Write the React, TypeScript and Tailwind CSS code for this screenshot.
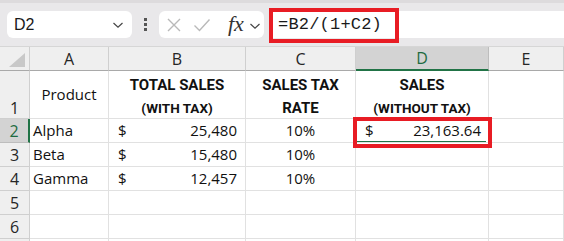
import React from "react";

const cols = ["A", "B", "C", "D", "E"];

const rows = [
  { n: "2", a: "Alpha", b: "25,480", c: "10%", d: "23,163.64" },
  { n: "3", a: "Beta", b: "15,480", c: "10%", d: "" },
  { n: "4", a: "Gamma", b: "12,457", c: "10%", d: "" },
  { n: "5", a: "", b: "", c: "", d: "" },
  { n: "6", a: "", b: "", c: "", d: "" },
  { n: "", a: "", b: "", c: "", d: "" },
];

const cell = "border-r border-b border-[#e1e1e1] bg-white";
const rowHead =
  "flex items-center justify-center border-r border-b border-[#cfcfcf] bg-[#efefef] text-[16px] text-[#262626]";

function Chevron({ className }: { className?: string }) {
  return (
    <svg width="12" height="8" viewBox="0 0 12 8" className={className}>
      <path d="M1.5 2 L6 6.2 L10.5 2" fill="none" stroke="#444" strokeWidth="1.2" />
    </svg>
  );
}

export default function App() {
  return (
    <div className="relative w-[564px] h-[241px] overflow-hidden bg-white font-['Open_Sans',sans-serif] text-[#111]">
      {/* formula toolbar */}
      <div className="h-[47px] bg-[#e9e8ea] border-t-[3px] border-[#dddbdd] border-b border-b-[#d6d6d6] flex items-center">
        <div className="ml-[7px] w-[125px] h-[27px] rounded-md bg-white flex items-center justify-between pl-[7px] pr-[8px]">
          <span className="text-[16px] leading-none text-[#1a1a1a] font-['Liberation_Sans',sans-serif]">D2</span>
          <Chevron />
        </div>
        <div className="w-[27px] flex flex-col items-center gap-[2px]">
          <span className="w-[3px] h-[3px] bg-[#555]" />
          <span className="w-[3px] h-[3px] bg-[#555]" />
          <span className="w-[3px] h-[3px] bg-[#555]" />
        </div>
        <div className="w-[105px] h-[27px] rounded-md bg-white flex items-center pl-[7px]">
          <svg width="16" height="16" viewBox="0 0 16 16">
            <path d="M2 2 L14 14 M14 2 L2 14" stroke="#b9b9b9" strokeWidth="1.4" fill="none" />
          </svg>
          <svg width="18" height="16" viewBox="0 0 18 16" className="ml-[11px]">
            <path d="M1.5 8.5 L6.5 13.5 L16.5 2.5" stroke="#b9b9b9" strokeWidth="1.4" fill="none" />
          </svg>
          <span className="ml-[17px] italic text-[22px] leading-none text-[#333] font-['Liberation_Serif',serif] pb-[2px]">fx</span>
          <Chevron className="ml-[5px] mt-[2px]" />
        </div>
        <div className="ml-[5px] flex-1 h-[27px] bg-white flex items-center pl-[9px]">
          <span className="text-[17px] leading-none tracking-[0.2px] text-[#1a1a1a] font-['Liberation_Mono',monospace]">=B2/(1+C2)</span>
        </div>
      </div>

      {/* sheet grid */}
      <div className="grid grid-cols-[30px_79px_137px_110px_133px_75px] grid-rows-[24px_48px_24px_24px_24px_24px_24px_4px] font-['Open_Sans',sans-serif]">
        <div className="relative bg-[#efefef] border-r border-b border-[#a9a9a9] border-r-[#cfcfcf]">
          <svg width="16" height="14" viewBox="0 0 16 14" className="absolute right-[4px] bottom-[3px]">
            <path d="M16 0 L16 14 L0 14 Z" fill="#c8c8c8" />
          </svg>
        </div>
        {cols.map((c) => (
          <div
            key={c}
            className={
              c === "D"
                ? "flex items-center justify-center bg-[#d3d3d3] border-r border-[#bdbdbd] border-b-2 border-b-[#217346] text-[16px] text-[#1e6b41]"
                : "flex items-center justify-center bg-[#efefef] border-r border-[#cfcfcf] border-b border-b-[#a9a9a9] text-[16px] text-[#262626]"
            }
          >
            {c}
          </div>
        ))}

        {/* row 1 */}
        <div className={`${rowHead} !items-end leading-none pb-[2px]`}>1</div>
        <div className={`${cell} flex items-center justify-center text-[15px]`}>Product</div>
        <div className={`${cell} flex flex-col items-center justify-center pt-[4px] font-['Roboto',sans-serif] font-bold leading-[23px]`}>
          <span className="text-[15px]">TOTAL SALES</span>
          <span className="text-[13.5px]">(WITH TAX)</span>
        </div>
        <div className={`${cell} flex flex-col items-center justify-center pt-[4px] font-['Roboto',sans-serif] font-bold leading-[23px]`}>
          <span className="text-[15px]">SALES TAX</span>
          <span className="text-[15px]">RATE</span>
        </div>
        <div className={`${cell} flex flex-col items-center justify-center pt-[4px] font-['Roboto',sans-serif] font-bold leading-[23px]`}>
          <span className="text-[15px]">SALES</span>
          <span className="text-[13.5px]">(WITHOUT TAX)</span>
        </div>
        <div className={cell} />

        {rows.map((r) => (
          <React.Fragment key={r.n + r.a}>
            <div
              className={
                r.n === "2"
                  ? "flex items-center justify-center bg-[#d3d3d3] border-b border-[#bdbdbd] border-r-2 border-r-[#217346] text-[16px] text-[#1e6b41]"
                  : rowHead
              }
            >
              {r.n}
            </div>
            <div className={`${cell} flex items-center pl-[3px] text-[15px]`}>{r.a}</div>
            <div className={`${cell} flex items-center justify-between pl-[9px] pr-[8px] text-[15px]`}>
              {r.b && (
                <>
                  <span>$</span>
                  <span>{r.b}</span>
                </>
              )}
            </div>
            <div className={`${cell} flex items-center justify-center text-[15px]`}>{r.c}</div>
            <div className={`${cell} relative flex items-center justify-between pl-[9px] pr-[7px] text-[15px]`}>
              {r.d && (
                <>
                  <span>$</span>
                  <span>{r.d}</span>
                  <span className="absolute left-0 right-[2px] bottom-0 h-[1px] bg-[#217346]" />
                </>
              )}
            </div>
            <div className={cell} />
          </React.Fragment>
        ))}
      </div>

      {/* red annotation boxes */}
      <div className="absolute left-[269px] top-[8px] w-[130px] h-[35px] border-4 border-[#e81c24]" />
      <div className="absolute left-[353px] top-[117px] w-[139px] h-[31px] border-4 border-[#e81c24]" />
    </div>
  );
}
